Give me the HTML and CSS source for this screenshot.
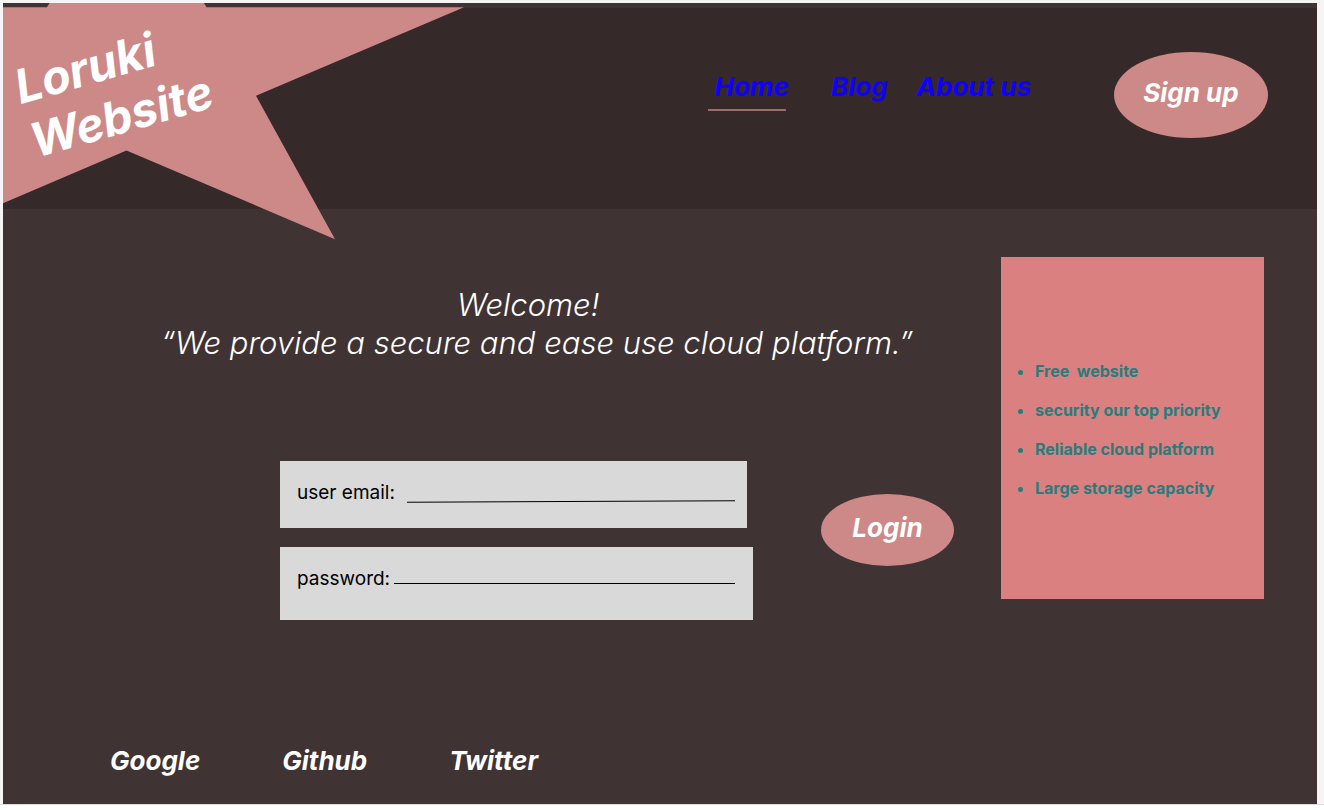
FILE: index.html
```html
<!DOCTYPE html>
<html lang="en">
<head>
<meta charset="utf-8">
<meta name="viewport" content="width=device-width, initial-scale=1">
<title>Loruki Website</title>
<link rel="stylesheet" href="styles.css">
</head>
<body>
<div class="canvas">
  <div class="page">
    <header class="header">
      <svg class="star" viewBox="0 0 464 240" aria-hidden="true">
        <path d="M0 4.300H44L46.500 0H201L203.500 4.300H461L253 92.800L332 236.200L123.500 147.500L0 200.200Z"/>
      </svg>
      <h1 class="brand">Loruki<br>Website</h1>
      <nav class="nav" aria-label="Main">
        <a class="nav-link nav-home" href="#home">Home</a>
        <a class="nav-link nav-blog" href="#blog">Blog</a>
        <a class="nav-link" href="#about">About us</a>
      </nav>
      <button class="pill signup" type="button">Sign up</button>
    </header>
    <main class="main">
      <section class="intro">
        <p class="welcome">Welcome!&nbsp;&nbsp;<br>“We provide a secure and ease use cloud platform.”</p>
        <form class="login">
          <div class="fields">
            <div class="field field-email">
              <label for="email">user email:</label>
              <input id="email" type="email">
            </div>
            <div class="field field-password">
              <label for="password">password:</label>
              <input id="password" type="password">
            </div>
          </div>
          <button class="pill login-button" type="submit">Login</button>
        </form>
      </section>
      <aside class="features">
        <ul class="feature-list">
          <li>Free&nbsp; website</li>
          <li>security our top priority</li>
          <li>Reliable cloud platform</li>
          <li>Large storage capacity</li>
        </ul>
      </aside>
    </main>
    <footer class="footer">
      <a class="footer-link" href="#google">Google</a>
      <a class="footer-link" href="#github">Github</a>
      <a class="footer-link" href="#twitter">Twitter</a>
    </footer>
  </div>
</div>
</body>
</html>
```
FILE: styles.css
```css
* {
  box-sizing: border-box;
}

body {
  margin: 0;
  background: #ffffff;
  color: #ffffff;
  font-family: Inter, "Liberation Sans", sans-serif;
  font-variant-ligatures: none;
}

.canvas {
  padding: 3px 7px 0 3px;
  background: #f5f5f5;
  border-bottom: 1px solid #dedede;
}

.page {
  position: relative;
  display: flex;
  flex-direction: column;
  min-height: calc(100vh - 9px);
  padding-top: 5px;
  overflow: hidden;
  background: #3f3333;
}

.header {
  display: flex;
  align-items: flex-start;
  justify-content: flex-end;
  padding: 44px 49px 71px 0;
  background: #362929;
}

.star {
  position: absolute;
  top: 0;
  left: 0;
  width: 464px;
  height: 240px;
  fill: #cd8987;
}

.brand {
  position: absolute;
  top: 30px;
  left: 17px;
  margin: 0;
  font-size: 47px;
  font-style: italic;
  font-weight: 700;
  line-height: 56px;
  transform: rotate(-16deg);
}

.nav {
  display: flex;
  margin: 19px 83px 0 0;
}

.nav-link,
.footer-link,
.pill {
  font-family: inherit;
  font-size: 26px;
  font-style: italic;
  font-weight: 700;
  line-height: 32px;
  text-decoration: none;
}

.nav-link {
  color: #0f00ff;
}

.nav-home {
  position: relative;
  margin-right: 42px;
}

.nav-home::after {
  content: "";
  position: absolute;
  top: 38px;
  right: 3px;
  left: -6px;
  height: 2px;
  background: #a06a69;
}

.nav-blog {
  margin-right: 29px;
}

.pill {
  padding: 0 0 4px;
  border: 0;
  border-radius: 50%;
  background: #cd8987;
  color: #ffffff;
}

.signup {
  width: 154px;
  height: 86px;
}

.main {
  display: flex;
  flex: 1;
  align-items: flex-start;
  padding: 48px 53px 0 0;
}

.intro {
  flex: 1;
}

.welcome {
  margin: 29px 0 0 70px;
  font-size: 31px;
  font-style: italic;
  font-weight: 300;
  line-height: 38px;
  text-align: center;
}

.login {
  display: flex;
  align-items: flex-start;
  margin: 99px 0 0 277px;
}

.fields {
  display: grid;
  gap: 19px;
  width: 473px;
}

.field {
  display: flex;
  align-items: flex-start;
  padding: 20px 18px 0 17px;
  background: #d9d9d9;
  color: #000000;
  font-size: 19px;
  line-height: 24px;
}

.field-email {
  gap: 12px;
  height: 67px;
  margin-right: 6px;
  padding-right: 12px;
}

.field-password {
  gap: 4px;
  height: 73px;
}

.field input {
  flex: 1;
  min-width: 0;
  height: 17px;
  padding: 0;
  border: 0;
  border-bottom: 1px solid #000000;
  background: transparent;
  font: inherit;
}

.field-email input {
  height: 21px;
  transform: rotate(-0.25deg);
}

.login-button {
  width: 133px;
  height: 72px;
  margin: 33px 0 0 68px;
}

.features {
  width: 263px;
  padding: 105px 20px 101px 34px;
  background: #db8080;
}

.feature-list {
  display: grid;
  gap: 20px;
  margin: 0;
  padding: 0;
  color: #277d7d;
  font-size: 16px;
  font-weight: 700;
  line-height: 19px;
}

.footer {
  display: flex;
  gap: 82px;
  padding: 0 107px 27px;
}

.footer-link {
  color: #ffffff;
}
```
